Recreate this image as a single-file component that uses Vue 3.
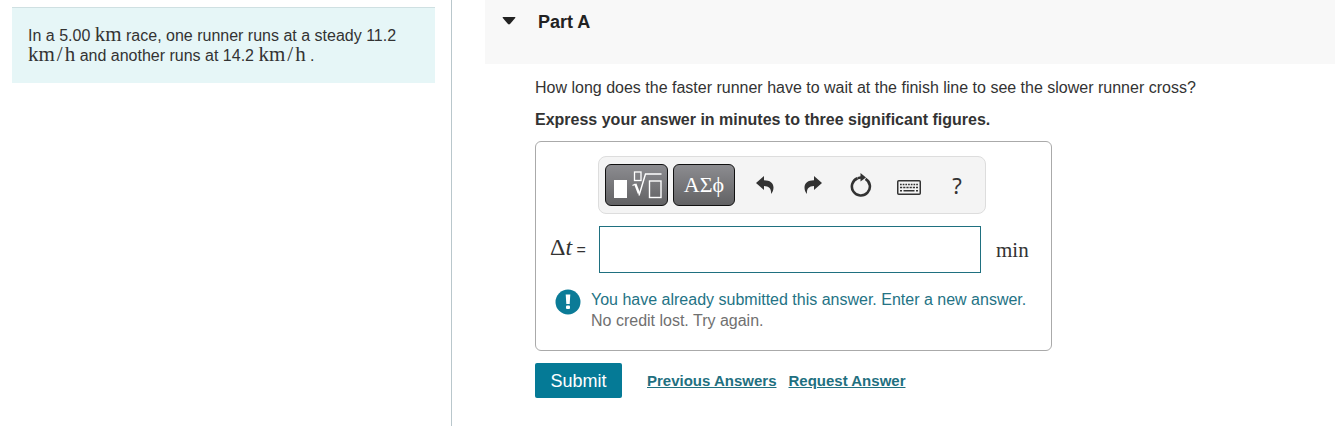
<script setup>
import { ref } from 'vue'

const answer = ref('')
</script>

<template>
  <div class="page">
    <aside class="side">
      <p class="problem">
        In a 5.00 <span class="math">km</span> race, one runner runs at a steady 11.2
        <span class="math">km<span class="slash">/</span>h</span> and another runs at 14.2
        <span class="math">km<span class="slash">/</span>h</span> .
      </p>
    </aside>

    <main class="main">
      <header class="part-head">
        <button class="toggle" type="button" aria-label="Collapse Part A">
          <svg width="14" height="8" viewBox="0 0 14 8"><path d="M1.2 0h11.6q1 .1.4.9L8 7q-1 .9-2 0L.8.9Q.2.1 1.2 0z" fill="#222" /></svg>
        </button>
        <h2>Part A</h2>
      </header>

      <section class="part-body">
        <p class="question">How long does the faster runner have to wait at the finish line to see the slower runner cross?</p>
        <p class="instruction">Express your answer in minutes to three significant figures.</p>

        <div class="answer-box">
          <div class="toolbar">
            <button class="dark" type="button" aria-label="Templates">
              <svg width="51" height="28" viewBox="0 0 51 28" fill="none" stroke="#fff">
                <rect x="3" y="9" width="13" height="18" fill="#fff" stroke="none" />
                <rect x="23.5" y="1" width="6.500" height="8.500" stroke-width="1.3" />
                <path d="M21.500 14.500L24.500 13" stroke-width="1.3" />
                <path d="M24.300 13L28 22.500" stroke-width="2.4" />
                <path d="M28 24.500L34.500 3H50.500" stroke-width="1.4" />
                <rect x="38.500" y="10" width="11.500" height="16.500" stroke-width="1.4" />
              </svg>
            </button>
            <button class="dark greek" type="button">ΑΣϕ</button>
            <button class="tool" type="button" aria-label="Undo">
              <svg width="20" height="20" viewBox="0 0 20 20"><path d="M1 8L9 1V5.200C15 5.200 18.500 8 18.500 12.500C18.500 15 17.700 17.200 16 19C16.500 13.500 14 11.200 9 11V15z" fill="#333" /></svg>
            </button>
            <button class="tool" type="button" aria-label="Redo">
              <svg width="20" height="20" viewBox="0 0 20 20"><path d="M19 8L11 1V5.200C5 5.200 1.500 8 1.500 12.500C1.500 15 2.300 17.200 4 19C3.500 13.500 6 11.200 11 11V15z" fill="#333" /></svg>
            </button>
            <button class="tool" type="button" aria-label="Reset">
              <svg width="22" height="24" viewBox="0 0 22 24"><path d="M15.500 5.800A9 9 0 1 1 7.500 5.200" fill="none" stroke="#333" stroke-width="2.600" /><path d="M10.500 0L16 4.500L10.500 8.500V5.800L7.500 6.500V4L10.500 3.200z" fill="#333" /></svg>
            </button>
            <button class="tool keyboard" type="button" aria-label="Keyboard shortcuts">
              <svg width="24" height="15" viewBox="0 0 24 15" fill="none" stroke="#333">
                <rect x=".75" y=".75" width="22.500" height="13.500" rx="1" stroke-width="1.500" />
                <path d="M3 4.500H21" stroke-width="1.500" stroke-dasharray="1.700 1" />
                <path d="M3 7.500H21" stroke-width="1.500" stroke-dasharray="2.200 1" />
                <path d="M3 10.800H5M6.500 10.800H17.500M19 10.800H21" stroke-width="1.500" />
              </svg>
            </button>
            <button class="tool help" type="button" aria-label="Help">?</button>
          </div>

          <div class="entry">
            <label for="answer"><span class="math delta">Δ<i>t</i></span> =</label>
            <input id="answer" v-model="answer" type="text" autocomplete="off" />
            <span class="math unit">min</span>
          </div>

          <div class="feedback" role="status">
            <svg width="26" height="26" viewBox="0 0 26 26">
              <circle cx="13" cy="13" r="12.500" fill="#0b7b97" />
              <path d="M10.700 5.500h4.600l-.6 9.500h-3.400z" fill="#fff" />
              <rect x="11" y="16.500" width="4" height="3.500" rx="1" fill="#fff" />
            </svg>
            <div>
              <p class="notice">You have already submitted this answer. Enter a new answer.</p>
              <p class="hint">No credit lost. Try again.</p>
            </div>
          </div>
        </div>

        <div class="actions">
          <button class="submit" type="button">Submit</button>
          <a href="#previous">Previous Answers</a>
          <a href="#request">Request Answer</a>
        </div>
      </section>
    </main>
  </div>
</template>

<style>
body {
  margin: 0;
  background: #fff;
}
</style>

<style scoped>
* {
  box-sizing: border-box;
}

.page {
  display: grid;
  grid-template-columns: minmax(0, 452fr) minmax(0, 883fr);
  min-height: 100vh;
  font-family: "Liberation Sans", Arial, sans-serif;
  font-size: 16px;
  line-height: 20px;
  color: #333;
}

p,
h2 {
  margin: 0;
}

button {
  padding: 0;
  border: 0;
  background: none;
  color: inherit;
  font: inherit;
  cursor: pointer;
}

svg {
  display: block;
}

.side {
  padding: 7px 16px 0 12px;
  border-right: 1px solid #b9c7cc;
}

.problem {
  padding: 18px 16px 17px;
  border-top: 1px solid #cfe0e2;
  background: #e6f6f7;
}

.math {
  font-family: "Liberation Serif", "Times New Roman", serif;
  font-size: 21px;
  line-height: 0;
}

.slash {
  padding: 0 2px;
}

.main {
  padding-left: 33px;
}

.part-head {
  display: flex;
  align-items: flex-start;
  gap: 22px;
  height: 64px;
  padding: 12px 17px;
  background: #f8f8f8;
  color: #222;
}

.toggle {
  padding: 5px 0;
}

.part-head h2 {
  font-size: 18px;
  line-height: 20px;
}

.part-body {
  padding: 14px 16px 0 50px;
}

.instruction {
  margin-top: 12px;
  font-weight: bold;
}

.answer-box {
  max-width: 517px;
  margin-top: 11px;
  padding: 14px 15px 19px 14px;
  border: 1px solid #aaa;
  border-radius: 6px;
}

.toolbar {
  display: flex;
  align-items: center;
  width: 388px;
  max-width: 100%;
  height: 58px;
  margin-left: 48px;
  padding: 0 4px 0 6px;
  border: 1px solid #ddd;
  border-radius: 8px;
  background: #f4f4f4;
}

.dark {
  display: flex;
  align-items: center;
  justify-content: center;
  width: 63px;
  height: 42px;
  margin-right: 5px;
  border: 1px solid #111;
  border-radius: 6px;
  background: linear-gradient(#8c8c90, #626264);
  color: #fff;
}

.greek {
  width: 62px;
  margin-right: 6px;
  font-family: "Liberation Serif", "Times New Roman", serif;
  font-size: 22px;
}

.tool {
  display: flex;
  flex: 1;
  align-items: center;
  justify-content: center;
}

.keyboard {
  padding-top: 4px;
}

.help {
  font-family: "Noto Sans", sans-serif;
  font-size: 22px;
}

.entry {
  display: flex;
  align-items: center;
  gap: 12px;
  margin-top: 12px;
}

.entry input {
  flex: 0 1 382px;
  min-width: 0;
  height: 47px;
  padding: 0 8px;
  border: 1px solid #1f7080;
  border-radius: 0;
  background: #fff;
  color: #333;
  font: inherit;
  outline: 0;
}

.entry label {
  flex: none;
  width: 37px;
  white-space: nowrap;
}

.delta {
  font-size: 24px;
}

.unit {
  margin-left: 3px;
}

.feedback {
  display: flex;
  gap: 10px;
  margin-top: 16px;
  padding-left: 5px;
}

.feedback svg {
  flex: none;
}

.feedback p {
  line-height: 21px;
}

.notice {
  color: #247385;
}

.hint {
  color: #707070;
}

.actions {
  display: flex;
  align-items: center;
  margin-top: 12px;
}

.submit {
  width: 87px;
  height: 35px;
  margin-right: 25px;
  border-radius: 2px;
  background: #057a96;
  color: #fff;
  font-size: 18px;
}

.actions a {
  margin-right: 12px;
  color: #1f7080;
  font-size: 15px;
  font-weight: bold;
}
</style>
